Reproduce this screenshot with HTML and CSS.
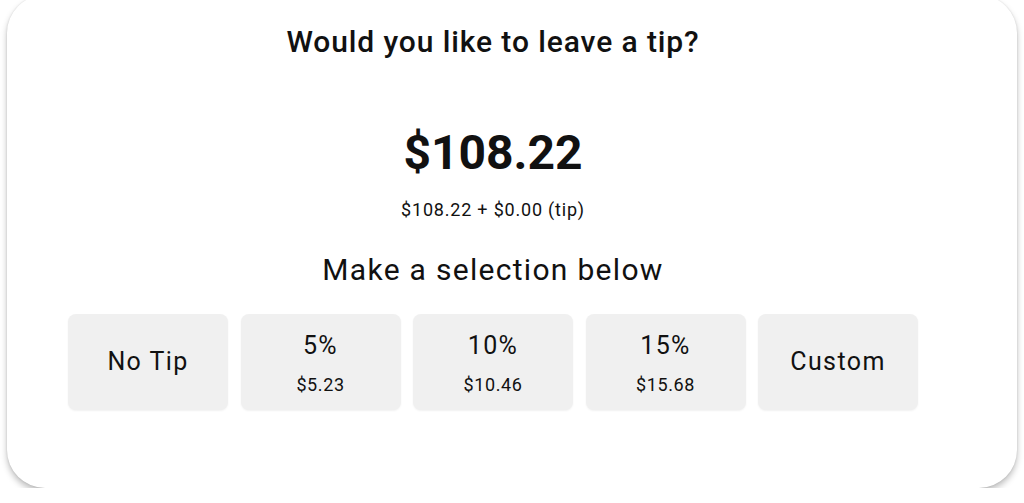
FILE: index.html
```html
<!DOCTYPE html>
<html lang="en">
<head>
    <meta charset="UTF-8">
    <meta name="viewport" content="width=device-width, initial-scale=1.0">
    <title>Leave a tip</title>
    <link rel="stylesheet" href="styles.css">
</head>
<body>

    <div class="card">
        <h1 class="question">Would you like to leave a tip?</h1>

        <div class="total">$108.22</div>
        <div class="breakdown">$108.22 + $0.00 (tip)</div>

        <h2 class="prompt">Make a selection below</h2>

        <div class="options">
            <button class="option">
                <span class="label">No Tip</span>
            </button>
            <button class="option">
                <span class="label">5%</span>
                <span class="amount">$5.23</span>
            </button>
            <button class="option">
                <span class="label">10%</span>
                <span class="amount">$10.46</span>
            </button>
            <button class="option">
                <span class="label">15%</span>
                <span class="amount">$15.68</span>
            </button>
            <button class="option">
                <span class="label">Custom</span>
            </button>
        </div>
    </div>

</body>
</html>
```

FILE: styles.css
```css
body {
    font-family: Roboto, "Liberation Sans", sans-serif;
    background-color: #ffffff;
    margin: 0;
    padding: 0 7px;
    color: #111;
}
.card {
    background: #fff;
    margin-top: -5px;
    height: 493px;
    border-radius: 38px;
    box-shadow: 0 4px 6px rgba(0, 0, 0, 0.25), 0 0 2px rgba(0, 0, 0, 0.12);
    padding: 0 38px 0 0;
    box-sizing: border-box;
    display: flex;
    flex-direction: column;
    align-items: center;
}
.question {
    margin: 29px 0 0;
    font-size: 30px;
    line-height: 36px;
    font-weight: 500;
    letter-spacing: 0.9px;
}
.total {
    margin-top: 65px;
    font-size: 48px;
    line-height: 56px;
    font-weight: 700;
}
.breakdown {
    margin-top: 18px;
    font-size: 18px;
    line-height: 22px;
    letter-spacing: 0.8px;
}
.prompt {
    margin: 31px 0 0;
    font-size: 30px;
    line-height: 36px;
    font-weight: 400;
    letter-spacing: 1.3px;
}
.options {
    display: flex;
    gap: 12.5px;
    margin-top: 26px;
}
.option {
    width: 160px;
    height: 96px;
    border: none;
    border-radius: 8px;
    background-color: #f0f0f0;
    box-shadow: 0 1px 2px rgba(0, 0, 0, 0.06);
    font-family: inherit;
    color: #111;
    display: flex;
    flex-direction: column;
    align-items: center;
    justify-content: center;
    gap: 15px;
    padding: 0;
}
.label {
    font-size: 25px;
    line-height: 30px;
    letter-spacing: 1.4px;
}
.amount {
    font-size: 18px;
    line-height: 18px;
    letter-spacing: 0.6px;
}
```
